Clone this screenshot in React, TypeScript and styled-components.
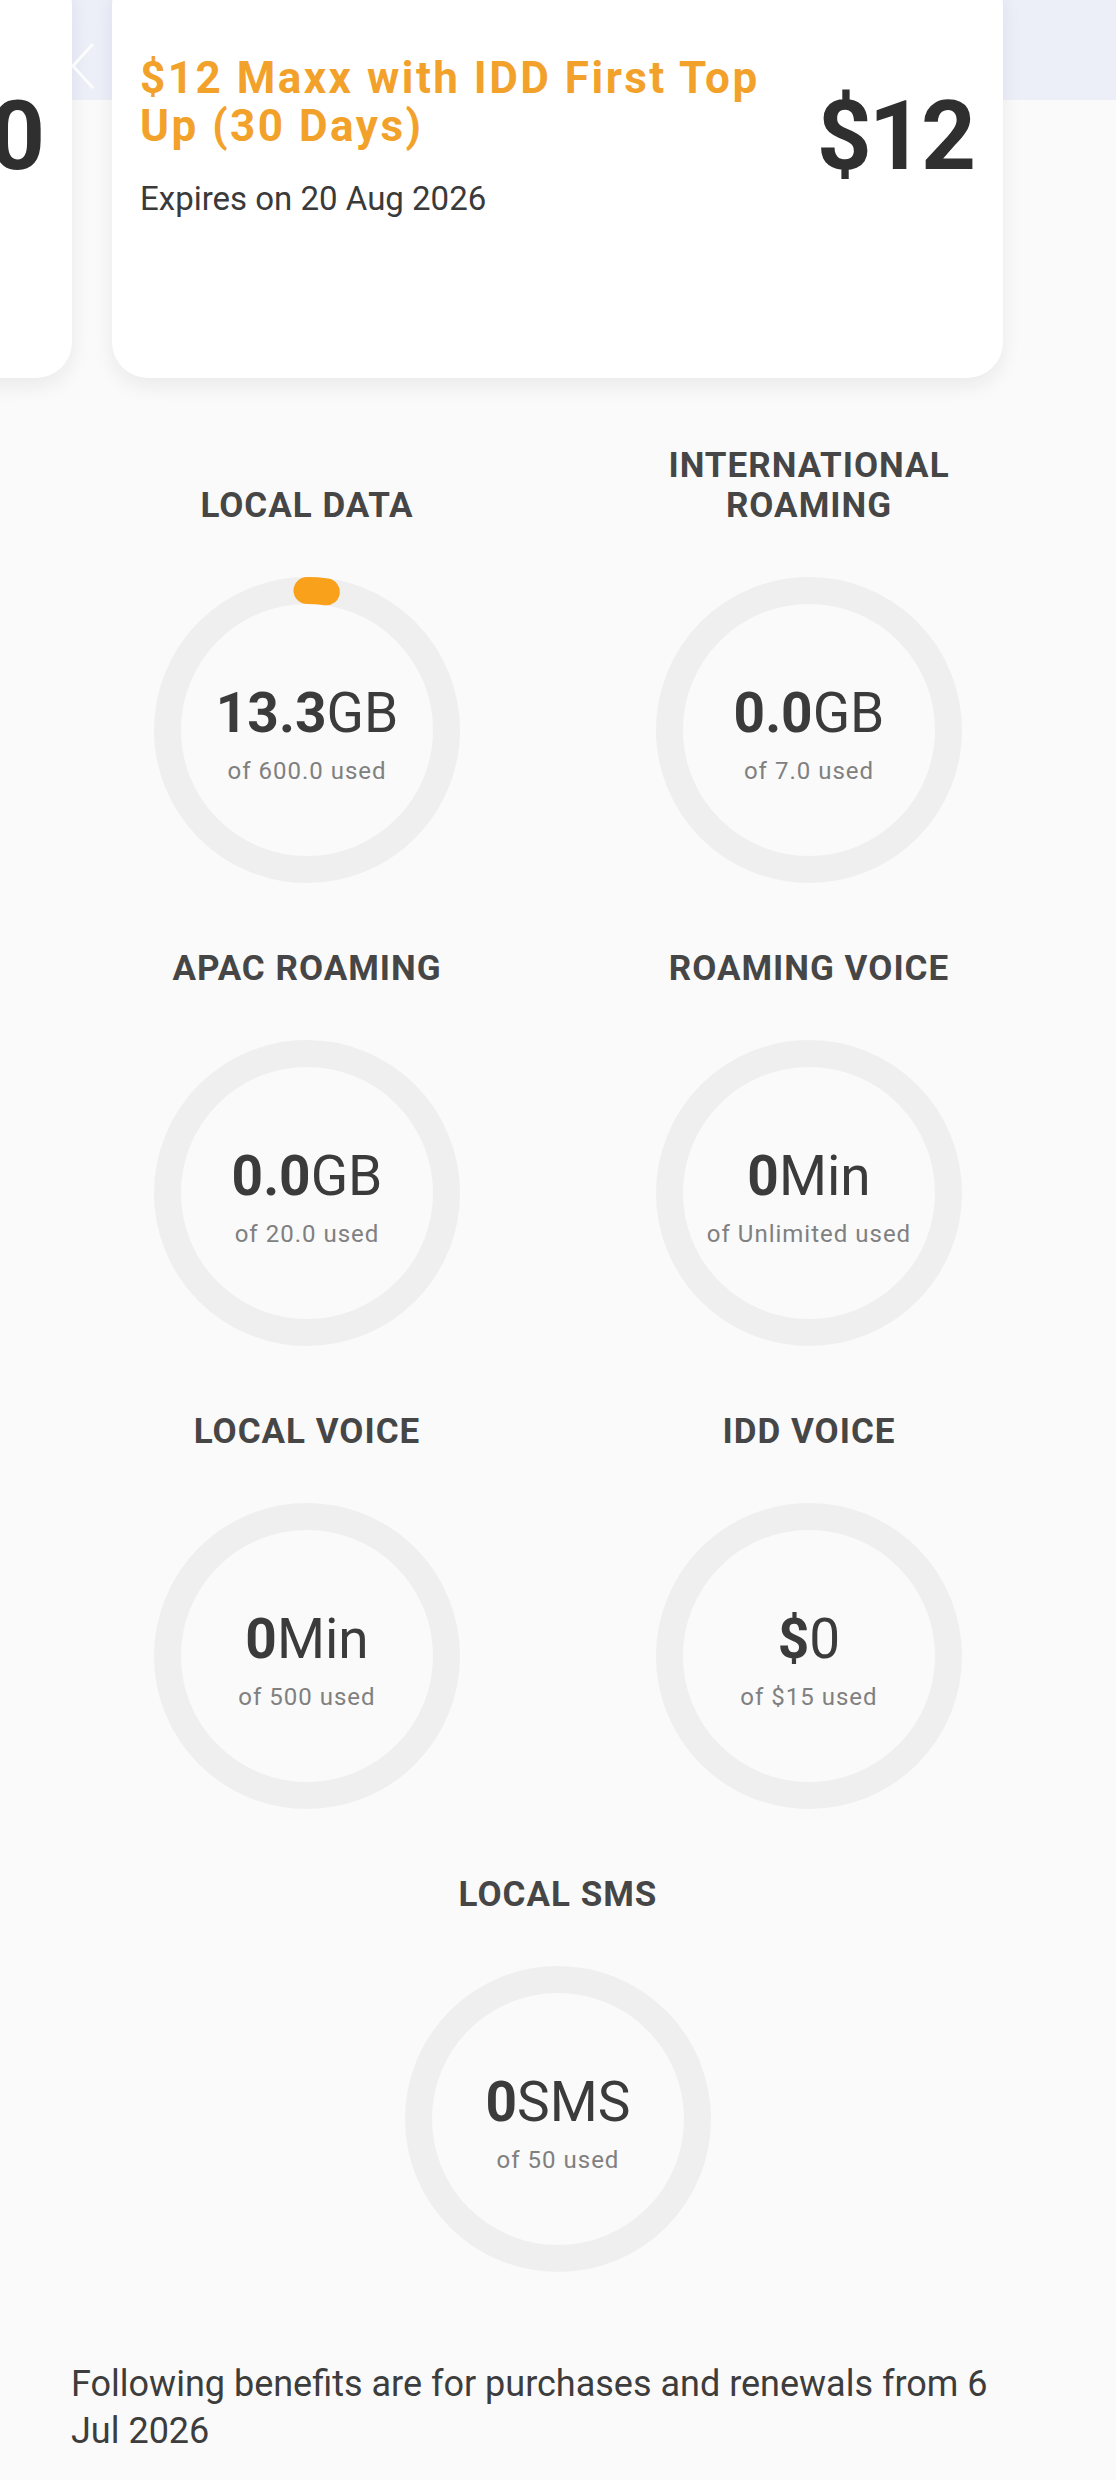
import React from 'react';
import styled, { createGlobalStyle } from 'styled-components';

const GlobalStyle = createGlobalStyle`
  html, body {
    margin: 0;
    padding: 0;
    background: #fafafa;
    overflow-x: hidden;
  }
  body {
    font-family: Roboto, 'Noto Sans', Arial, sans-serif;
    color: #3b3b3b;
  }
`;

const Page = styled.main`
  width: 1116px;
  min-height: 2480px;
  overflow: hidden;
`;

/* plan carousel */
const Hero = styled.section`
  position: relative;
  display: flex;
  flex-direction: column;
  background: linear-gradient(to bottom, #eceef8 0, #eceef8 100px, transparent 100px);
`;

const Track = styled.div`
  display: flex;
  gap: 40px;
  margin: -30px 0 0 -819px;
`;

const PlanCard = styled.article`
  flex: 0 0 891px;
  height: 408px;
  box-sizing: border-box;
  padding: 84px 30px 0 28px;
  display: flex;
  align-items: flex-start;
  gap: 26px;
  background: #fff;
  border-radius: 36px;
  box-shadow: 0 8px 20px rgba(30, 30, 60, 0.07);
`;

const PlanText = styled.div`
  flex: 1;
  min-width: 0;
`;

const PlanTitle = styled.h2`
  margin: 0;
  font-size: 44px;
  line-height: 48px;
  font-weight: 700;
  letter-spacing: 2.5px;
  color: #f2a22a;
`;

const PlanExpiry = styled.p`
  margin: 29px 0 0;
  font-size: 33px;
  line-height: 40px;
  color: #3a3a3a;
`;

const PlanPrice = styled.div`
  margin-top: 34px;
  font-size: 96px;
  line-height: 96px;
  font-weight: 700;
  letter-spacing: -3px;
  color: #2f2f2f;
  white-space: nowrap;
`;

const PrevArrow = styled.button`
  position: absolute;
  left: 71px;
  top: 43px;
  width: 24px;
  height: 46px;
  padding: 0;
  border: none;
  background: none;
  opacity: 0.85;
`;

/* usage gauges */
const GaugeGrid = styled.section`
  display: grid;
  grid-template-columns: 1fr 1fr;
  row-gap: 66px;
  padding: 68px 56px 0;
  align-items: end;
`;

const GaugeItem = styled.div<{ $wide?: boolean }>`
  display: flex;
  flex-direction: column;
  align-items: center;
  gap: 51px;
  grid-column: ${(p) => (p.$wide ? '1 / -1' : 'auto')};
`;

const GaugeLabel = styled.h3`
  margin: 0;
  max-width: 340px;
  text-align: center;
  font-size: 35px;
  line-height: 40px;
  font-weight: 700;
  letter-spacing: 1px;
  color: #464646;
`;

const Ring = styled.div`
  display: grid;
  place-items: center;
  width: 306px;
  height: 306px;

  & > * {
    grid-area: 1 / 1;
  }
`;

const RingContent = styled.div`
  display: flex;
  flex-direction: column;
  align-items: center;
  gap: 13px;
  margin-top: 10px;
`;

const Amount = styled.div`
  font-size: 55px;
  line-height: 60px;
  color: #3b3b3b;
  white-space: nowrap;

  b {
    font-weight: 700;
  }
`;

const Used = styled.div`
  font-size: 24px;
  line-height: 31px;
  letter-spacing: 1px;
  color: #808080;
  white-space: nowrap;
`;

const Note = styled.p`
  margin: 0;
  padding: 89px 100px 80px 71px;
  font-size: 36px;
  line-height: 47px;
  color: #3d3d3d;
`;

type Usage = {
  label: string;
  used: string;
  unit: string;
  total: string;
  fraction: number;
};

const usages: Usage[] = [
  { label: 'Local Data', used: '13.3', unit: 'GB', total: '600.0', fraction: 13.3 / 600 },
  { label: 'International Roaming', used: '0.0', unit: 'GB', total: '7.0', fraction: 0 },
  { label: 'APAC Roaming', used: '0.0', unit: 'GB', total: '20.0', fraction: 0 },
  { label: 'Roaming Voice', used: '0', unit: 'Min', total: 'Unlimited', fraction: 0 },
  { label: 'Local Voice', used: '0', unit: 'Min', total: '500', fraction: 0 },
  { label: 'IDD Voice', used: '$', unit: '0', total: '$15', fraction: 0 },
  { label: 'Local SMS', used: '0', unit: 'SMS', total: '50', fraction: 0 },
];

const SIZE = 306;
const STROKE = 27;
const R = (SIZE - STROKE) / 2;
const CIRC = 2 * Math.PI * R;

function ProgressRing({ fraction }: { fraction: number }) {
  return (
    <svg width={SIZE} height={SIZE} viewBox={`0 0 ${SIZE} ${SIZE}`}>
      <circle cx={SIZE / 2} cy={SIZE / 2} r={R} fill="none" stroke="#efefef" strokeWidth={STROKE} />
      {fraction > 0 && (
        <circle
          cx={SIZE / 2}
          cy={SIZE / 2}
          r={R}
          fill="none"
          stroke="#f9a11b"
          strokeWidth={STROKE}
          strokeLinecap="round"
          strokeDasharray={`${fraction * CIRC} ${CIRC}`}
          transform={`rotate(-90 ${SIZE / 2} ${SIZE / 2})`}
        />
      )}
    </svg>
  );
}

function Gauge({ u, wide }: { u: Usage; wide?: boolean }) {
  return (
    <GaugeItem $wide={wide}>
      <GaugeLabel>{u.label.toUpperCase()}</GaugeLabel>
      <Ring>
        <ProgressRing fraction={u.fraction} />
        <RingContent>
          <Amount>
            <b>{u.used}</b>
            {u.unit}
          </Amount>
          <Used>of {u.total} used</Used>
        </RingContent>
      </Ring>
    </GaugeItem>
  );
}

export default function App() {
  return (
    <Page>
      <GlobalStyle />
      <Hero>
        <Track>
          <PlanCard>
            <PlanText>
              <PlanTitle>$10 Maxx Top Up (30 Days)</PlanTitle>
              <PlanExpiry>Expires on 20 Aug 2026</PlanExpiry>
            </PlanText>
            <PlanPrice>$10</PlanPrice>
          </PlanCard>
          <PlanCard>
            <PlanText>
              <PlanTitle>$12 Maxx with IDD First Top Up (30 Days)</PlanTitle>
              <PlanExpiry>Expires on 20 Aug 2026</PlanExpiry>
            </PlanText>
            <PlanPrice>$12</PlanPrice>
          </PlanCard>
        </Track>
        <PrevArrow aria-label="Previous plan">
          <svg width="24" height="46" viewBox="0 0 24 46">
            <polyline points="22,1 2,23 22,45" fill="none" stroke="#fff" strokeWidth="3" />
          </svg>
        </PrevArrow>
      </Hero>

      <GaugeGrid>
        {usages.slice(0, 6).map((u) => (
          <Gauge key={u.label} u={u} />
        ))}
        <Gauge u={usages[6]} wide />
      </GaugeGrid>

      <Note>Following benefits are for purchases and renewals from 6 Jul 2026</Note>
    </Page>
  );
}
